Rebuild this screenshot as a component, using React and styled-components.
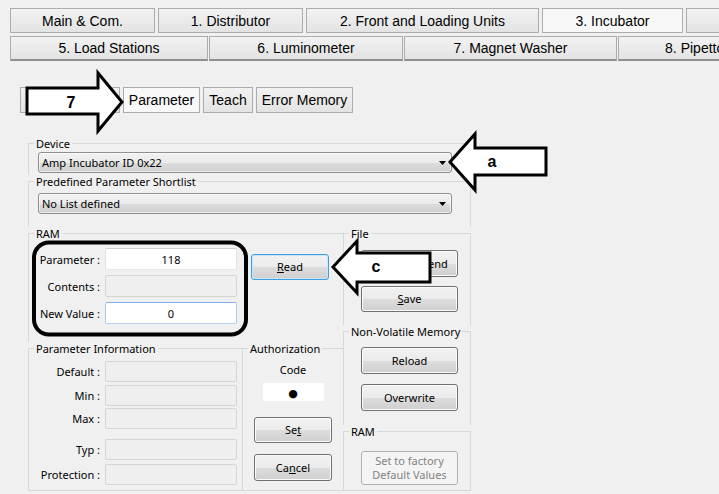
import React from "react";
import styled, { createGlobalStyle, css } from "styled-components";

const UI_FONT = `"Noto Sans", "DejaVu Sans", sans-serif`;
const TAB_FONT = `"Liberation Sans", Arial, sans-serif`;
const LINE = "#d5d9dc";

const GlobalStyle = createGlobalStyle`
  html, body { margin: 0; padding: 0; background: #f0f0f0; }
  body {
    width: 719px; height: 494px; overflow: hidden;
    font-family: ${UI_FONT}; font-size: 11px; color: #000;
  }
  #root { position: relative; width: 719px; height: 494px; }
`;

const Page = styled.div`
  position: relative;
  box-sizing: border-box;
  width: 719px;
  height: 494px;
  overflow: hidden;
  padding: 8px 0 0 10px;
  display: flex;
  flex-direction: column;
`;

const TabRow = styled.div`
  display: flex;
  gap: ${(p) => p.$gap}px;
  margin-top: ${(p) => p.$mt || 0}px;
  margin-left: ${(p) => p.$ml || 0}px;
  white-space: nowrap;
`;

const Tab = styled.div`
  flex: 0 0 ${(p) => p.$w}px;
  box-sizing: border-box;
  height: ${(p) => p.$h || 25}px;
  border: 1px solid #acacac;
  border-bottom-color: ${(p) => (p.$shadow ? "#8f8f8f" : "#acacac")};
  border-bottom-width: ${(p) => (p.$shadow ? 2 : 1)}px;
  background: ${(p) =>
    p.$active ? "#f8f8f8" : "linear-gradient(#f2f2f2, #e3e3e3)"};
  font-family: ${TAB_FONT};
  font-size: 14px;
  display: flex;
  align-items: center;
  justify-content: center;
  overflow: hidden;
`;

const Panel = styled.div`
  margin: 24px 0 0 18px;
  width: 443px;
  display: flex;
  flex-direction: column;
`;

const Group = styled.fieldset`
  margin: 0;
  padding: 0;
  min-width: 0;
  box-sizing: border-box;
  width: ${(p) => (p.$w ? `${p.$w}px` : "auto")};
  height: ${(p) => p.$h}px;
  border: 1px solid ${LINE};
  ${(p) => p.$noBottom && "border-bottom: none;"}
  ${(p) => p.$noLeft && "border-left: none;"}
  ${(p) => p.$noRight && "border-right: none;"}
  display: flex;
  flex-direction: column;
  align-items: ${(p) => p.$align || "stretch"};
`;

const Legend = styled.legend`
  margin-left: 5px;
  padding: 0 2px;
  font-size: 11px;
  line-height: 13px;
  white-space: nowrap;
`;

const Select = styled.div`
  box-sizing: border-box;
  margin: ${(p) => p.$mt}px 0 0 9px;
  width: 414px;
  height: 21px;
  border: 1px solid #8e8f8f;
  border-radius: 3px;
  background: linear-gradient(#f2f2f2 0%, #ebebeb 50%, #dddddd 51%, #cfcfcf 100%);
  box-shadow: inset 0 0 0 1px rgba(255, 255, 255, 0.6);
  display: flex;
  align-items: center;
  justify-content: space-between;
  padding: 0 5px 0 3px;
  font-size: 11px;
`;

const Lower = styled.div`
  display: flex;
  height: 264px;
`;

const Column = styled.div`
  display: flex;
  flex-direction: column;
  width: ${(p) => p.$w}px;
`;

const Row = styled.div`
  display: flex;
`;

const RamBody = styled.div`
  display: flex;
  align-items: flex-start;
`;

const Fields = styled.div`
  display: flex;
  flex-direction: column;
`;

const FieldRow = styled.div`
  display: flex;
  align-items: center;
  gap: 5px;
  margin-top: ${(p) => p.$mt}px;
  height: ${(p) => p.$h}px;
`;

const Label = styled.span`
  width: 71px;
  text-align: right;
  white-space: nowrap;
  font-size: 11px;
`;

const inputKinds = {
  normal: css`
    background: #fff;
    border-color: #c9ccd0 #dfe2e6 #e3e6ea #dfe2e6;
  `,
  focus: css`
    background: #fff;
    border-color: #7eb4ea #a8cbee #b5d3f0 #a8cbee;
  `,
  readonly: css`
    background: #efefef;
    border-color: #d5d5d5;
  `,
  plain: css`
    background: #fff;
    border-color: #f2f2f2;
  `,
};

const TextBox = styled.input`
  box-sizing: border-box;
  width: ${(p) => p.$w || 132}px;
  height: ${(p) => p.$h}px;
  margin: ${(p) => p.$mt || 0}px 0 0 0;
  border: 1px solid;
  border-radius: 2px;
  padding: 0;
  text-align: center;
  font-family: ${UI_FONT};
  font-size: 11px;
  color: #000;
  outline: none;
  ${(p) => inputKinds[p.$kind || "normal"]}
`;

const buttonKinds = {
  normal: css`
    border-color: #707070;
    background: linear-gradient(#f2f2f2 0%, #ebebeb 50%, #dddddd 51%, #cfcfcf 100%);
    box-shadow: inset 0 0 0 1px #fbfbfb;
    color: #000;
  `,
  focus: css`
    border-color: #3c9fe0;
    background: linear-gradient(#f2f2f2 0%, #ebebeb 50%, #dddddd 51%, #cfcfcf 100%);
    box-shadow: inset 0 0 0 1px #c9e7f8;
    color: #000;
  `,
  disabled: css`
    border-color: #adb2b5;
    background: #f4f4f4;
    color: #838383;
  `,
};

const Button = styled.button`
  box-sizing: border-box;
  flex: 0 0 auto;
  width: ${(p) => p.$w}px;
  height: ${(p) => p.$h}px;
  margin: ${(p) => p.$mt || 0}px 0 0 ${(p) => p.$ml || 0}px;
  border: 1px solid;
  border-radius: 3px;
  padding: 0;
  font-family: ${UI_FONT};
  font-size: 11px;
  line-height: 14px;
  white-space: nowrap;
  ${(p) => buttonKinds[p.$kind || "normal"]}
`;

const CodeLabel = styled.div`
  margin-top: 8px;
  line-height: 13px;
  font-size: 11px;
`;

const Annotations = styled.svg`
  position: absolute;
  left: 0;
  top: 0;
  width: 719px;
  height: 494px;
  pointer-events: none;
`;

const ArrowText = styled.text`
  font-family: ${TAB_FONT};
  font-weight: bold;
  font-size: 16px;
`;

function Caret() {
  return (
    <svg width="7" height="4" viewBox="0 0 7 4">
      <path d="M0 0 H7 L3.5 4 Z" fill="#000" />
    </svg>
  );
}

export default function App() {
  return (
    <>
      <GlobalStyle />
      <Page>
        <TabRow $gap={3}>
          <Tab $w={145}>Main &amp; Com.</Tab>
          <Tab $w={145}>1. Distributor</Tab>
          <Tab $w={233}>2. Front and Loading Units</Tab>
          <Tab $w={141} $active>3. Incubator</Tab>
          <Tab $w={220} />
        </TabRow>
        <TabRow $gap={1} $mt={3}>
          <Tab $w={198} $shadow>5. Load Stations</Tab>
          <Tab $w={194} $shadow>6. Luminometer</Tab>
          <Tab $w={213} $shadow>7. Magnet Washer</Tab>
          <Tab $w={158} $shadow>8. Pipettor</Tab>
        </TabRow>

        <TabRow $gap={3} $mt={26} $ml={10}>
          <Tab $w={100} $h={26} />
          <Tab $w={77} $h={26} $active>Parameter</Tab>
          <Tab $w={50} $h={26}>Teach</Tab>
          <Tab $w={97} $h={26}>Error Memory</Tab>
        </TabRow>

        <Panel>
          <Group $h={38} $noBottom>
            <Legend>Device</Legend>
            <Select $mt={2}>
              <span>Amp Incubator ID 0x22</span>
              <Caret />
            </Select>
          </Group>
          <Group $h={52} $noBottom>
            <Legend>Predefined Parameter Shortlist</Legend>
            <Select $mt={5}>
              <span>No List defined</span>
              <Caret />
            </Select>
          </Group>

          <Lower>
            <Column $w={315}>
              <Group $h={115} $noBottom $noRight>
                <Legend>RAM</Legend>
                <RamBody>
                  <Fields>
                    <FieldRow $mt={8} $h={22}>
                      <Label>Parameter :</Label>
                      <TextBox $h={22} readOnly value="118" />
                    </FieldRow>
                    <FieldRow $mt={5} $h={22}>
                      <Label>Contents :</Label>
                      <TextBox $h={22} $kind="readonly" readOnly value="" />
                    </FieldRow>
                    <FieldRow $mt={5} $h={22}>
                      <Label>New Value :</Label>
                      <TextBox $h={22} $kind="focus" readOnly value="0" />
                    </FieldRow>
                  </Fields>
                  <Button $kind="focus" $w={78} $h={26} $mt={14} $ml={14}>
                    <u>R</u>ead
                  </Button>
                </RamBody>
              </Group>
              <Row>
                <Group $w={215} $h={149}>
                  <Legend>Parameter Information</Legend>
                  <FieldRow $mt={6} $h={21}>
                    <Label>Default :</Label>
                    <TextBox $h={21} $kind="readonly" readOnly value="" />
                  </FieldRow>
                  <FieldRow $mt={3} $h={21}>
                    <Label>Min :</Label>
                    <TextBox $h={21} $kind="readonly" readOnly value="" />
                  </FieldRow>
                  <FieldRow $mt={2} $h={21}>
                    <Label>Max :</Label>
                    <TextBox $h={21} $kind="readonly" readOnly value="" />
                  </FieldRow>
                  <FieldRow $mt={10} $h={21}>
                    <Label>Typ :</Label>
                    <TextBox $h={21} $kind="readonly" readOnly value="" />
                  </FieldRow>
                  <FieldRow $mt={4} $h={21}>
                    <Label>Protection :</Label>
                    <TextBox $h={21} $kind="readonly" readOnly value="" />
                  </FieldRow>
                </Group>
                <Group $w={100} $h={149} $noLeft $noRight $align="center">
                  <Legend>Authorization</Legend>
                  <CodeLabel>Code</CodeLabel>
                  <TextBox $w={63} $h={20} $mt={6} $kind="plain" readOnly value="●" />
                  <Button $w={78} $h={26} $mt={15}>
                    Se<u>t</u>
                  </Button>
                  <Button $w={78} $h={27} $mt={11}>
                    Ca<u>n</u>cel
                  </Button>
                </Group>
              </Row>
            </Column>

            <Column $w={128}>
              <Group $h={98} $noBottom>
                <Legend>File</Legend>
                <Button $w={97} $h={27} $mt={10} $ml={17}>
                  Load and Send
                </Button>
                <Button $w={97} $h={26} $mt={9} $ml={17}>
                  <u>S</u>ave
                </Button>
              </Group>
              <Group $h={100} $noBottom>
                <Legend>Non-Volatile Memory</Legend>
                <Button $w={97} $h={27} $mt={9} $ml={17}>
                  Reload
                </Button>
                <Button $w={97} $h={27} $mt={10} $ml={17}>
                  Overwrite
                </Button>
              </Group>
              <Group $h={66}>
                <Legend>RAM</Legend>
                <Button $kind="disabled" $w={97} $h={34} $mt={13} $ml={17}>
                  Set to factory
                  <br />
                  Default Values
                </Button>
              </Group>
            </Column>
          </Lower>
        </Panel>

        <Annotations viewBox="0 0 719 494">
          <polygon
            points="27,88 98,88 98,73 122,102 98,131 98,114 27,114"
            fill="#fff"
            stroke="#000"
            strokeWidth="3"
          />
          <ArrowText x="71" y="108" textAnchor="middle">7</ArrowText>

          <polygon
            points="546,148 475,148 475,134 450,162 475,190 475,175 546,175"
            fill="#fff"
            stroke="#000"
            strokeWidth="3"
          />
          <ArrowText x="492" y="167" textAnchor="middle">a</ArrowText>

          <rect
            x="34"
            y="242.5"
            width="212"
            height="92"
            rx="15"
            ry="15"
            fill="none"
            stroke="#000"
            strokeWidth="4"
          />

          <polygon
            points="430,253 357,253 357,241 333,267 357,293 357,282 430,282"
            fill="#fff"
            stroke="#000"
            strokeWidth="3"
          />
          <ArrowText x="376" y="272" textAnchor="middle">c</ArrowText>
        </Annotations>
      </Page>
    </>
  );
}
